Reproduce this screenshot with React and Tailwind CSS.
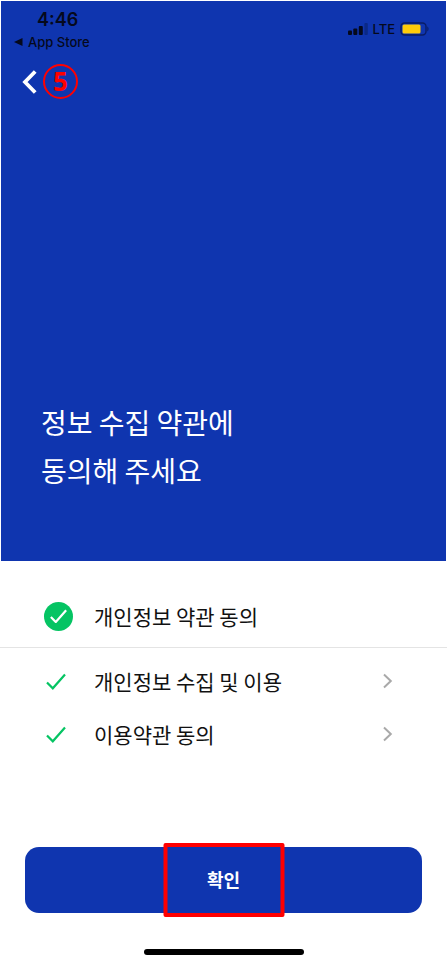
const details = [
  { id: "privacy", name: "개인정보 수집 및 이용" },
  { id: "terms", name: "이용약관 동의" },
];

function StatusBar() {
  return (
    <div className="flex items-start justify-between pt-[7px] pr-[17px] pl-3 font-['Inter',sans-serif] text-[#05091c]">
      <div>
        <p className="pl-6 text-lg leading-6 font-semibold">4:46</p>
        <a href="#app-store" className="flex items-center gap-1 text-[13px] leading-5 font-medium">
          <svg width="11" height="10" viewBox="0 0 11 10" fill="currentColor" aria-hidden="true">
            <path d="M1 5 9.5 1v8z" />
          </svg>
          App Store
        </a>
      </div>
      <div className="mt-[13px] flex items-center gap-[5px]">
        <svg width="20" height="12" viewBox="0 0 20 12" fill="currentColor" aria-hidden="true">
          <rect x="0" y="7.5" width="4" height="4.5" rx="1" />
          <rect x="5.3" y="5.5" width="4" height="6.5" rx="1" />
          <rect x="10.8" y="3" width="4" height="9" rx="1" />
          <rect x="16.4" y="0" width="3.4" height="12" rx="1" opacity=".28" />
        </svg>
        <span className="text-[13px] leading-4 font-medium">LTE</span>
        <svg width="29" height="14" viewBox="0 0 29 14" aria-hidden="true">
          <rect x="1" y="1" width="25" height="12" rx="3.5" fill="none" stroke="#0a1d66" strokeWidth="1.4" />
          <rect x="2.5" y="2.5" width="18" height="9" rx="1.5" fill="#ffcc0a" />
          <path d="M27.3 4.6c1.6.5 1.6 4.3 0 4.8z" fill="#0a1d66" />
        </svg>
      </div>
    </div>
  );
}

function Checkbox({ id, round }) {
  return (
    <span className="grid size-[30px] shrink-0 place-items-center">
      <input
        id={id}
        type="checkbox"
        defaultChecked
        className={
          round
            ? "col-start-1 row-start-1 size-[29px] appearance-none rounded-full bg-[#05c463]"
            : "col-start-1 row-start-1 size-[29px] appearance-none"
        }
      />
      <svg
        className={
          round
            ? "pointer-events-none col-start-1 row-start-1 w-[17px] text-white"
            : "pointer-events-none col-start-1 row-start-1 mr-1 w-5 text-[#05c463]"
        }
        viewBox="0 0 20 17"
        fill="none"
        stroke="currentColor"
        strokeWidth={round ? 2.6 : 2.2}
        aria-hidden="true"
      >
        <path d="M1 9.5 6.8 15.3 19 1.5" />
      </svg>
    </span>
  );
}

export default function App() {
  return (
    <main className="flex flex-col bg-white font-['Noto_Sans_CJK_KR',sans-serif]">
      <header className="mx-px mt-px flex min-h-[560px] flex-col bg-[#0f35af]">
        <StatusBar />
        <div className="mt-3 flex items-center gap-[6px] pl-[21px]">
          <button type="button" aria-label="뒤로" className="text-white">
            <svg width="15" height="24" viewBox="0 0 15 24" fill="none" stroke="currentColor" strokeWidth="3.8">
              <path d="M13.2 1.5 3 12l10.2 10.5" />
            </svg>
          </button>
          <span className="flex size-[35px] items-center justify-center rounded-full border-2 border-[#ff0000] pb-[2px] font-['Noto_Sans',sans-serif] text-[26px] leading-8 font-bold text-[#ff0000]">
            5
          </span>
        </div>
        <h1 className="mt-auto px-10 pb-[67px] text-[28px] leading-12 text-white">
          정보 수집 약관에
          <br />
          동의해 주세요
        </h1>
      </header>

      <section className="text-[21px] leading-8 text-[#111111]">
        <div className="flex items-center gap-[21px] border-b border-[#e4e4e4] pt-[39px] pr-12 pb-[15px] pl-[43px]">
          <Checkbox id="all" round />
          <label htmlFor="all">개인정보 약관 동의</label>
        </div>
        <ul className="pt-[7px]">
          {details.map((item) => (
            <li key={item.id} className="flex items-center gap-[21px] pt-[10px] pr-[54px] pb-[11px] pl-[43px]">
              <Checkbox id={item.id} />
              <label htmlFor={item.id} className="grow">
                {item.name}
              </label>
              <a href={`#${item.id}`} aria-label={item.name}>
                <svg width="11" height="16" viewBox="0 0 11 16" fill="none" stroke="#a9a9a9" strokeWidth="2">
                  <path d="m2 1.5 6.8 6.5L2 14.5" />
                </svg>
              </a>
            </li>
          ))}
        </ul>
      </section>

      <div className="relative mt-[86px] px-[25px]">
        <button
          type="button"
          className="h-[66px] w-full rounded-[14px] bg-[#0f35af] pb-[2px] text-lg font-bold text-white"
        >
          확인
        </button>
        <span className="pointer-events-none absolute -inset-y-1 left-1/2 w-[121px] -translate-x-1/2 rounded-xs border-4 border-[#ff0000]" />
      </div>

      <div className="mx-auto mt-9 mb-[10px] h-[6px] w-40 rounded-full bg-black" />
    </main>
  );
}
